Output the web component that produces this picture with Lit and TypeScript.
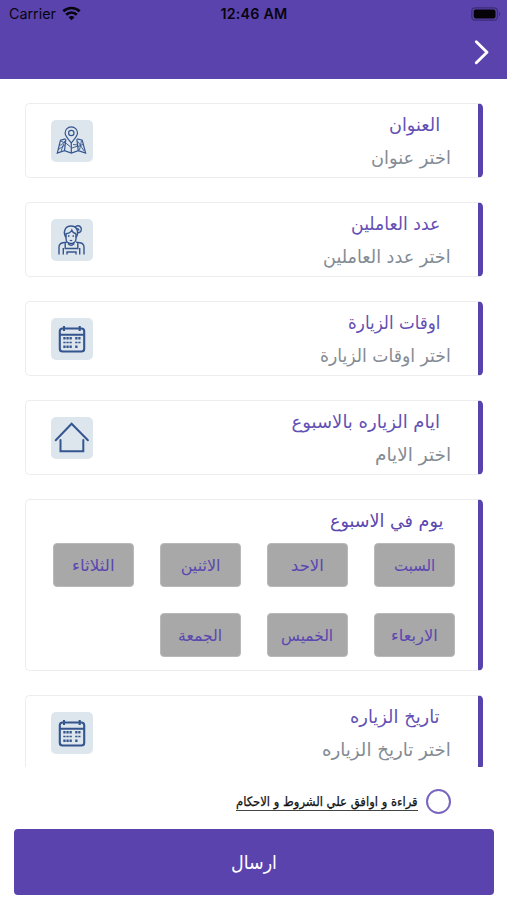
import { LitElement, html, css, svg } from "lit";
import { customElement, property } from "lit/decorators.js";

type IconName = "map" | "worker" | "calendar" | "house";

const icons = {
  map: svg`<g stroke-width="1.2">
    <path d="M20.300 22.800c-4-4.600-6.200-6.800-6.200-9.800a6.200 6.200 0 0 1 12.400 0c0 3-2.200 5.200-6.200 9.800z"/>
    <circle cx="20.300" cy="13" r="2.700"/>
    <path d="M14.500 18.800l-5 1.400L6.300 33l7.200-2.300 6.800 2.300 7-2.300 7.300 2.300-3.400-12.800-5-1.400"/>
    <path d="M13.500 30.700l1.300-11.500M20.300 33V23M27.300 30.700l-1.500-11.500"/>
    <path d="M8.400 25.500c3-.8 4-2.500 6-5M7.400 29.500l6.400-4.500M10 31.500l2.700-8M9.500 21l4.800 2M22 24.500l4.500.5M21 28l6-2M27 21.500l6 9.500M27 26.500l6-2.500M30.500 20.500l-2 9.500M14.700 23l5 4" stroke-width=".9"/>
  </g>`,
  worker: svg`<g stroke-width="1.400">
    <path d="M15 15v4.500c0 2.900 2.200 5 5 5s5-2.100 5-5V15"/>
    <path d="M15 18.500c-3.400-5.500-1-11.500 5-11.500s8.400 6 5 11.500"/>
    <path d="M14.500 14.800c3.500-.3 5.300-1.500 6.300-3.600 .7 2 2.200 3.300 4.500 3.600"/>
    <path d="M24 8.300a3.500 3.500 0 1 1 3 5.500M25 9.500c1.800-.2 2.800.6 3.200 2"/>
    <path d="M17.800 16v2M22.200 16v2M18.800 21.300c.8.500 1.600.5 2.400 0" stroke-width="1.200"/>
    <path d="M8 35.500v-7.300c0-2.600 1.400-4 4-4.400l4-.7M33 35.500v-7.300c0-2.600-1.400-4-4-4.400l-4-.7"/>
    <path d="M12.300 35.500V29M28.700 35.500V29M14.200 24v5.500h12.600V24M17.500 23.500v1.600c1.400 1.500 3.800 1.500 5.200 0v-1.600M16 35.500V33h9v2.500"/>
  </g>`,
  calendar: svg`<g stroke-width="2.100">
    <rect x="8.800" y="10.500" width="24.400" height="23" rx="2.800"/>
    <path d="M8.800 16.700h24.400M13 8v5M28.700 8v5"/>
    <path d="M12.300 20.300h8.700M24.200 20.300h5.300M12.300 28.800h8.700M24.200 28.800h3" stroke-width="2.600" stroke-dasharray="2.300 .8"/>
    <path d="M12.300 24.600h8.700M24.200 24.600h5.300" stroke-width="1.500" stroke-dasharray="2.300 .8"/>
  </g>`,
  house: svg`<g stroke-width="2" stroke-linecap="round">
    <path d="M4.700 23.200L20.600 6.800l16.300 16.400M9.500 23v11.300h22.800V23"/>
  </g>`,
};

@customElement("fit-text")
class FitText extends LitElement {
  @property() text = "";
  @property({ type: Number }) width = 0;
  static styles = css`
    :host { display: block; direction: rtl; white-space: nowrap; line-height: inherit; }
    .line { display: inline-block; transform-origin: right center; }
  `;
  render() {
    return html`<span class="line">${this.text}</span>`;
  }
  updated() {
    const line = this.renderRoot.querySelector<HTMLElement>(".line")!;
    line.style.transform = `scaleX(${this.width / line.offsetWidth})`;
    this.style.width = `${this.width}px`;
  }
}

@customElement("choice-card")
class ChoiceCard extends LitElement {
  @property() heading = "";
  @property() hint = "";
  @property() icon: IconName = "map";
  @property({ type: Number }) headingWidth = 0;
  @property({ type: Number }) hintWidth = 0;
  static styles = css`
    :host { display: block; flex: none; }
    .card {
      box-sizing: border-box; height: 75px; display: flex; justify-content: space-between;
      border: 1px solid #ededef; border-right: 5px solid #5843ae; border-radius: 5px;
      padding: 0 27px 0 25px; background: #fff;
    }
    .tile { width: 42px; height: 42px; border-radius: 5px; background: #dde6ed; margin-top: 16px; }
    .tile svg { display: block; fill: none; stroke: #35558f; }
    .copy { display: flex; flex-direction: column; align-items: flex-end; padding-top: 4px; }
    .heading { color: #6350b4; font-size: 18px; line-height: 33px; margin-right: 11px; }
    .hint { color: #848b94; font-size: 18px; line-height: 33px; }
  `;
  render() {
    return html`<div class="card">
      <div class="tile"><svg width="42" height="42" viewBox="0 0 42 42">${icons[this.icon]}</svg></div>
      <div class="copy">
        <fit-text class="heading" .text=${this.heading} .width=${this.headingWidth}></fit-text>
        <fit-text class="hint" .text=${this.hint} .width=${this.hintWidth}></fit-text>
      </div>
    </div>`;
  }
}

const choices: { heading: string; hint: string; icon: IconName; hw: number; sw: number }[] = [
  { heading: "العنوان", hint: "اختر عنوان", icon: "map", hw: 51, sw: 80 },
  { heading: "عدد العاملين", hint: "اختر عدد العاملين", icon: "worker", hw: 89, sw: 128 },
  { heading: "اوقات الزيارة", hint: "اختر اوقات الزيارة", icon: "calendar", hw: 92, sw: 131 },
  { heading: "ايام الزياره بالاسبوع", hint: "اختر الايام", icon: "house", hw: 148, sw: 76 },
];
const dateChoice = { heading: "تاريخ الزياره", hint: "اختر تاريخ الزياره", icon: "calendar" as IconName, hw: 90, sw: 129 };

const days: [string, number][] = [
  ["السبت", 41], ["الاحد", 33], ["الاثنين", 40], ["الثلاثاء", 43],
  ["الاربعاء", 47], ["الخميس", 52], ["الجمعة", 44],
];

@customElement("app-root")
class AppRoot extends LitElement {
  static styles = css`
    :host {
      display: flex; flex-direction: column; height: 900px; overflow: hidden; background: #fff;
      font-family: "DejaVu Sans", sans-serif;
    }
    .top { flex: none; height: 79px; background: #5b43ae; color: #07050e; box-sizing: border-box; }
    .status {
      display: grid; grid-template-columns: 1fr auto 1fr; align-items: center; height: 27px;
      padding: 0 6px 0 9px; font-family: Inter, sans-serif; font-size: 14px;
    }
    .carrier { display: flex; align-items: center; gap: 6px; font-size: 14.3px; }
    .time { font-weight: 600; font-size: 14.3px; letter-spacing: .2px; position: relative; left: -1px; }
    .battery { justify-self: end; }
    .nav { display: flex; justify-content: flex-end; padding: 12px 17px 0 0; }
    svg { display: block; }
    .list {
      flex: none; height: 688px; box-sizing: border-box; overflow: hidden;
      display: flex; flex-direction: column; gap: 24px; padding: 24px 24px 0 25px;
    }
    .panel {
      flex: none; box-sizing: border-box; height: 172px;
      border: 1px solid #ededef; border-right: 5px solid #5843ae; border-radius: 5px;
      padding: 4px 23px 0 27px; direction: rtl;
    }
    .panel-title { color: #5b47b0; font-size: 18px; line-height: 33px; margin: 0 12px 6px 0; }
    .days { display: grid; grid-template-columns: repeat(4, 81px); gap: 26px; }
    .day {
      height: 44px; box-sizing: border-box; border: 1px solid #b9b9bb; border-radius: 4px; background: #a8a8a8;
      color: #5b47b0; font-size: 16px; line-height: 43px; display: flex; justify-content: center;
    }
    .terms {
      display: flex; direction: rtl; align-items: center; gap: 8px; height: 62px;
      padding: 6px 56px 0 0; box-sizing: border-box; flex: none; color: #111;
    }
    .radio { width: 25px; height: 25px; box-sizing: border-box; border: 2px solid #7865bf; border-radius: 50%; }
    .agree { font-size: 13px; line-height: 17px; border-bottom: 1px solid #444; margin-top: 2px; -webkit-text-stroke: .25px #111; }
    .send {
      flex: none; height: 66px; margin: 0 13px 0 14px; border-radius: 4px; background: #5b43ae; color: #fff;
      font-size: 19px; line-height: 66px; display: flex; justify-content: center;
    }
  `;
  card(c: (typeof choices)[number]) {
    return html`<choice-card .heading=${c.heading} .hint=${c.hint} .icon=${c.icon}
      .headingWidth=${c.hw} .hintWidth=${c.sw}></choice-card>`;
  }
  render() {
    return html`
      <header class="top">
        <div class="status">
          <div class="carrier">Carrier
            <svg width="19" height="15" viewBox="0 0 19 15" fill="none" stroke="currentColor" stroke-width="2.700">
              <path d="M1.300 5.300c4.700-4.400 11.700-4.400 16.400 0M4.200 8.700c3.100-2.900 7.500-2.900 10.600 0"/>
              <path d="M9.500 14.300l-3-3.100c1.800-1.600 4.200-1.600 6 0z" fill="currentColor" stroke="none"/>
            </svg>
          </div>
          <div class="time">12:46 AM</div>
          <svg class="battery" width="30" height="14" viewBox="0 0 30 14">
            <rect x=".8" y=".8" width="25.600" height="12.400" rx="3.500" fill="none" stroke="#3c2d75" stroke-width="1.300"/>
            <rect x="2.700" y="2.500" width="21.800" height="9" rx="2" fill="#050308"/>
            <path d="M28 5c1.600.6 1.600 3.400 0 4z" fill="#3c2d75"/>
          </svg>
        </div>
        <div class="nav">
          <svg width="18" height="26" viewBox="0 0 18 26" fill="none" stroke="#fff" stroke-width="2.900" stroke-linecap="round" stroke-linejoin="round">
            <path d="M4.300 2.800L15 13.200L4.300 23.700"/>
          </svg>
        </div>
      </header>
      <main class="list">
        ${choices.map((c) => this.card(c))}
        <section class="panel">
          <fit-text class="panel-title" .text=${"يوم في الاسبوع"} .width=${113}></fit-text>
          <div class="days">
            ${days.map(([name, w]) => html`<div class="day"><fit-text .text=${name} .width=${w}></fit-text></div>`)}
          </div>
        </section>
        ${this.card(dateChoice)}
      </main>
      <div class="terms">
        <span class="radio"></span>
        <fit-text class="agree" .text=${"قراءة و اوافق علي الشروط و الاحكام"} .width=${182}></fit-text>
      </div>
      <div class="send"><fit-text .text=${"ارسال"} .width=${46}></fit-text></div>
    `;
  }
}
